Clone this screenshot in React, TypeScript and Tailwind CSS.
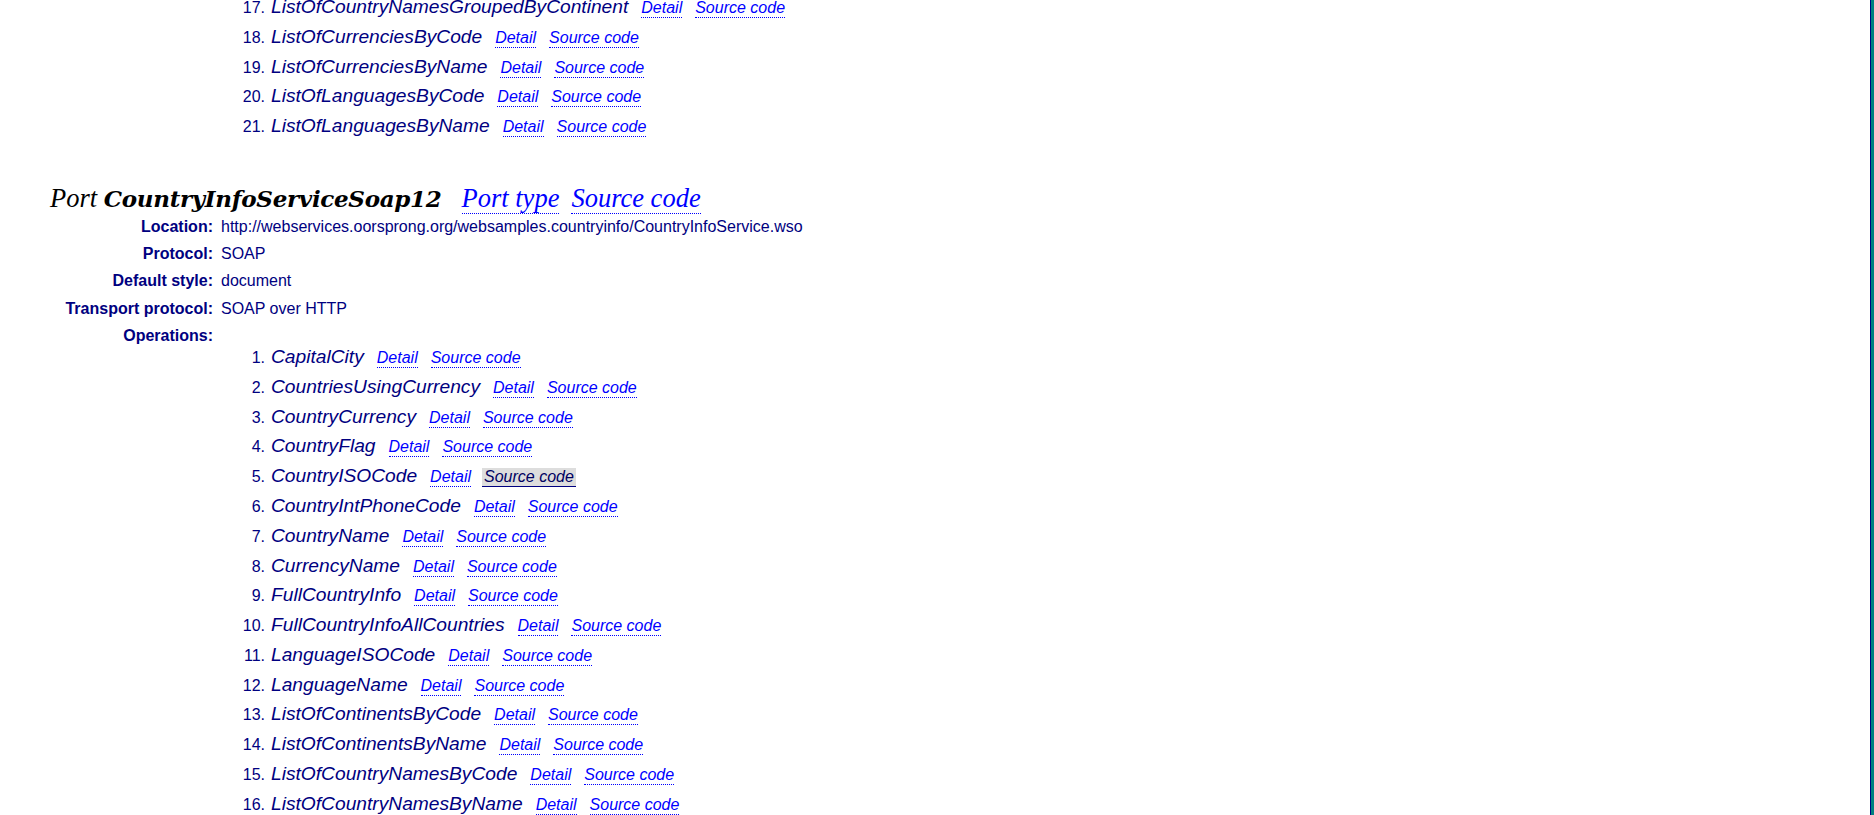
import React from 'react';

const topOps: [number, string][] = [
  [17, 'ListOfCountryNamesGroupedByContinent'],
  [18, 'ListOfCurrenciesByCode'],
  [19, 'ListOfCurrenciesByName'],
  [20, 'ListOfLanguagesByCode'],
  [21, 'ListOfLanguagesByName'],
];

const ops = [
  'CapitalCity',
  'CountriesUsingCurrency',
  'CountryCurrency',
  'CountryFlag',
  'CountryISOCode',
  'CountryIntPhoneCode',
  'CountryName',
  'CurrencyName',
  'FullCountryInfo',
  'FullCountryInfoAllCountries',
  'LanguageISOCode',
  'LanguageName',
  'ListOfContinentsByCode',
  'ListOfContinentsByName',
  'ListOfCountryNamesByCode',
  'ListOfCountryNamesByName',
];

const props: [string, string][] = [
  ['Location:', 'http://webservices.oorsprong.org/websamples.countryinfo/CountryInfoService.wso'],
  ['Protocol:', 'SOAP'],
  ['Default style:', 'document'],
  ['Transport protocol:', 'SOAP over HTTP'],
];

function OpRow({ n, name, hover }: { n: number; name: string; hover?: boolean }) {
  return (
    <li className="flex items-baseline h-[29.8px] leading-[29.8px]">
      <span className="w-[52px] text-right mr-[6px] text-[16px] text-[#000080]">{n}.</span>
      <span className="italic text-[19.2px] text-[#000080]">{name}</span>
      <a href="#" className="ml-[13px] italic text-[16px] leading-[18px] text-[#0000ff] border-b border-dotted border-[#0000ff]">
        Detail
      </a>
      <a
        href="#"
        className={
          hover
            ? 'ml-[11px] px-[2px] italic text-[16px] leading-[18px] text-[#000060] bg-[#dddddd] border-b border-solid border-[#000080]'
            : 'ml-[13px] italic text-[16px] leading-[18px] text-[#0000ff] border-b border-dotted border-[#0000ff]'
        }
      >
        Source code
      </a>
    </li>
  );
}

export default function App() {
  return (
    <div className="flex w-full h-[815px] overflow-hidden bg-white font-['Liberation_Sans',Arial,sans-serif]">
      <div className="flex-1 min-w-0">
        <ol className="pl-[213px] -mt-[8px]">
          {topOps.map(([n, name]) => (
            <OpRow key={n} n={n} name={name} />
          ))}
        </ol>

        <h2 className="mt-[41px] pl-[50px] font-['Liberation_Serif',Georgia,serif] italic text-[26.5px] leading-[32px] text-black">
          Port{' '}
          <b className="font-['DejaVu_Serif',Georgia,serif] text-[23px] tracking-[-0.3px]">CountryInfoServiceSoap12</b>
          <a href="#" className="ml-[20px] text-[#0000ff] border-b border-dotted border-[#0000ff]">Port type</a>
          <a href="#" className="ml-[12px] text-[#0000ff] border-b border-dotted border-[#0000ff]">Source code</a>
        </h2>

        <div className="-mt-[2px]">
          {props.map(([k, v]) => (
            <div key={k} className="flex items-baseline h-[27.2px] leading-[27.2px]">
              <span className="w-[213px] text-right font-bold text-[16px] text-[#000080]">{k}</span>
              <span className="ml-[8px] text-[16px] text-[#000080]">{v}</span>
            </div>
          ))}
          <div className="flex items-baseline h-[27.2px] leading-[27.2px]">
            <span className="w-[213px] text-right font-bold text-[16px] text-[#000080]">Operations:</span>
          </div>
          <ol className="pl-[213px] -mt-[7px]">
            {ops.map((name, i) => (
              <OpRow key={name} n={i + 1} name={name} hover={i === 4} />
            ))}
          </ol>
        </div>
      </div>
      <div className="w-px h-full bg-[#000080]" />
      <div className="w-[3px] h-full bg-[#008080]" />
    </div>
  );
}
